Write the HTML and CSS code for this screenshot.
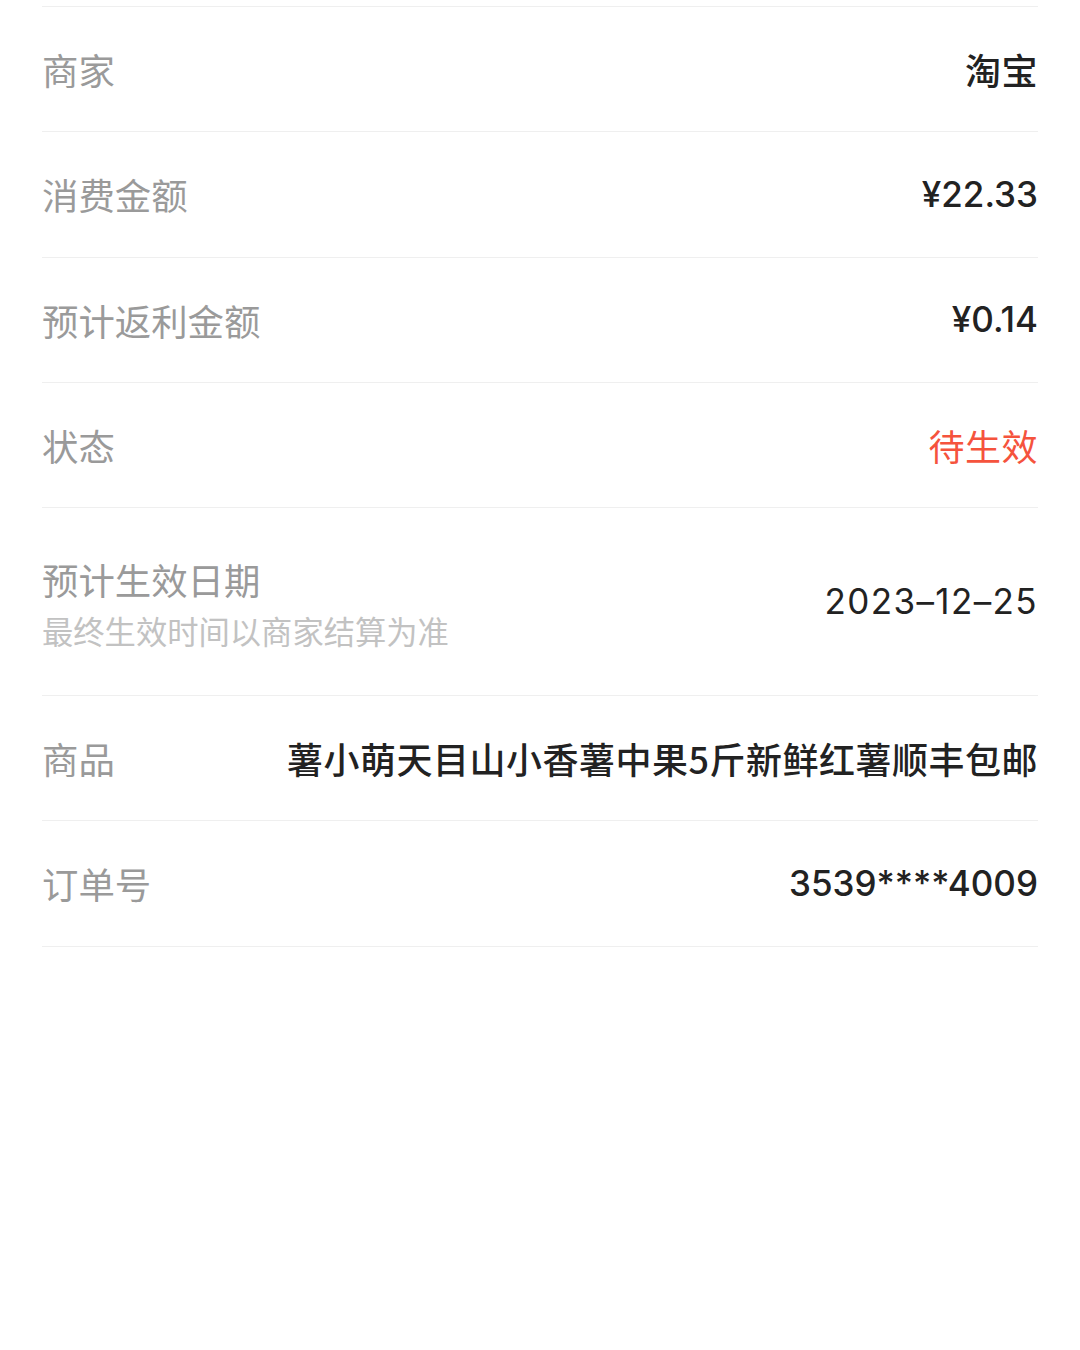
FILE: index.html
```html
<!DOCTYPE html>
<html lang="zh-CN">
<head>
<meta charset="utf-8">
<title>订单详情</title>
<link rel="stylesheet" href="styles.css">
</head>
<body>
<div class="list">
  <div class="row">
    <div class="label">商家</div>
    <div class="value">淘宝</div>
  </div>
  <div class="row">
    <div class="label">消费金额</div>
    <div class="value num">¥22.33</div>
  </div>
  <div class="row">
    <div class="label">预计返利金额</div>
    <div class="value num">¥0.14</div>
  </div>
  <div class="row">
    <div class="label">状态</div>
    <div class="value status">待生效</div>
  </div>
  <div class="row tall">
    <div class="label-group">
      <div class="label">预计生效日期</div>
      <div class="sub">最终生效时间以商家结算为准</div>
    </div>
    <div class="value num date">2023–12–25</div>
  </div>
  <div class="row">
    <div class="label">商品</div>
    <div class="value">薯小萌天目山小香薯中果5斤新鲜红薯顺丰包邮</div>
  </div>
  <div class="row">
    <div class="label">订单号</div>
    <div class="value num">3539****4009</div>
  </div>
</div>
</body>
</html>
```

FILE: styles.css
```css
html, body {
  margin: 0;
  padding: 0;
  background: #ffffff;
}
body {
  font-family: "Noto Sans CJK SC", "Noto Sans", sans-serif;
  width: 1080px;
}
.list {
  margin: 6px 42px 0 42px;
  border-top: 1px solid #efefef;
}
.row {
  box-sizing: border-box;
  height: 125.3px;
  border-bottom: 1px solid #efefef;
  display: flex;
  align-items: center;
  justify-content: space-between;
  gap: 40px;
}
.row.tall {
  height: 188px;
}
.label {
  font-size: 36.4px;
  color: #9a9a9a;
  line-height: 1;
  white-space: nowrap;
}
.label-group {
  display: flex;
  flex-direction: column;
  gap: 18px;
  margin-top: 4px;
}
.sub {
  font-size: 31.3px;
  line-height: 1;
  color: #c2c2c2;
  white-space: nowrap;
}
.value {
  font-size: 36px;
  letter-spacing: 0.5px;
  line-height: 1;
  color: #222222;
  font-weight: 500;
  white-space: nowrap;
  text-align: right;
}
.num {
  font-family: "Inter", "Noto Sans CJK SC", sans-serif;
  font-weight: 500;
  font-size: 35px;
  letter-spacing: 0;
}
.date {
  font-weight: 400;
  letter-spacing: 1.4px;
}
.status {
  color: #f5533d;
  font-weight: 400;
}
```
